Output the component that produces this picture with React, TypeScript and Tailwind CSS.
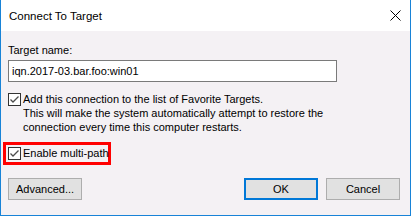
import React from 'react'

function Check() {
  return (
    <span className="flex h-[13px] w-[13px] shrink-0 items-center justify-center border border-[#333333] bg-white">
      <svg width="11" height="11" viewBox="0 0 11 11" fill="none">
        <path d="M1.5 5.5 L4 8 L9.5 2.5" stroke="#4d4d4d" strokeWidth="1.3" />
      </svg>
    </span>
  )
}

function Button({ label, primary }: { label: string; primary?: boolean }) {
  return (
    <button
      className={
        primary
          ? 'flex h-[22px] w-[74px] items-center justify-center border-2 border-[#0078d7] bg-[#e1e1e1] text-black'
          : 'flex h-[22px] w-[74px] items-center justify-center border border-[#adadad] bg-[#e1e1e1] text-black'
      }
    >
      {label}
    </button>
  )
}

export default function App() {
  return (
    <div className="h-[217px] w-[412px] bg-white font-['Liberation_Sans',Arial,sans-serif] text-[11px] leading-[15px] text-black">
      <div className="flex h-[216px] w-[411px] flex-col border-x border-b border-[#1883d7]">
        <div className="flex h-[31px] shrink-0 items-center justify-between bg-white pl-[8px] pr-[9px]">
          <span className="pt-[1px] text-[11.5px]">Connect To Target</span>
          <svg width="11" height="11" viewBox="0 0 11 11" fill="none">
            <path d="M0.5 0.5 L10.5 10.5 M10.5 0.5 L0.5 10.5" stroke="#000" strokeWidth="1" />
          </svg>
        </div>

        <div className="flex flex-1 flex-col bg-[#f4f1f4] pl-[7px] pr-[10px] pt-[12px]">
          <span>Target name:</span>
          <div className="mt-[2px] flex h-[22px] w-[329px] items-center border border-[#7a7a7a] bg-white pl-[3px]">
            iqn.2017-03.bar.foo:win01
          </div>

          <div className="mt-[10px] flex items-start gap-[2px] leading-[14px]">
            <div className="mt-[1px]">
              <Check />
            </div>
            <div className="flex flex-col">
              <span>Add this connection to the list of Favorite Targets.</span>
              <span>This will make the system automatically attempt to restore the</span>
              <span>connection every time this computer restarts.</span>
            </div>
          </div>

          <div className="-ml-[5px] mt-[8px] flex h-[23px] w-[108px] items-center gap-[2px] border-[3px] border-[#ff0000] px-[2px]">
            <Check />
            <span className="whitespace-nowrap">Enable multi-path</span>
          </div>

          <div className="mt-[13px] flex items-center">
            <Button label="Advanced..." />
            <div className="ml-auto flex gap-[8px]">
              <Button label="OK" primary />
              <Button label="Cancel" />
            </div>
          </div>
        </div>
      </div>
    </div>
  )
}
